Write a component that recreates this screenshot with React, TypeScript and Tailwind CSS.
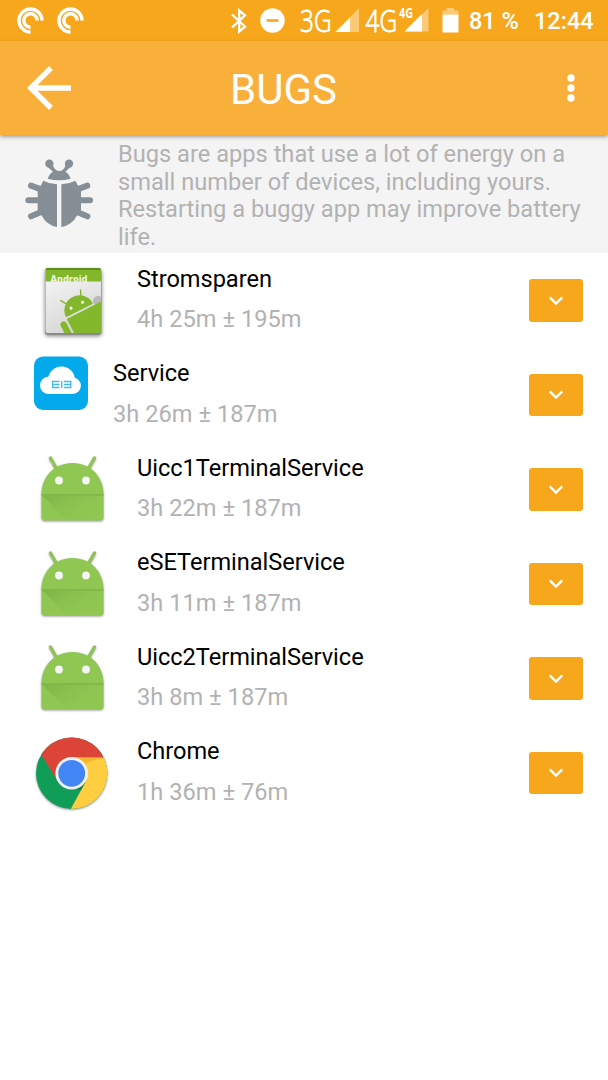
import type { ReactNode } from "react";

type IconKind = "package" | "cloud" | "android" | "chrome";

type Bug = {
  name: string;
  benefit: string;
  icon: IconKind;
};

const BUGS: Bug[] = [
  { name: "Stromsparen", benefit: "4h 25m ± 195m", icon: "package" },
  { name: "Service", benefit: "3h 26m ± 187m", icon: "cloud" },
  { name: "Uicc1TerminalService", benefit: "3h 22m ± 187m", icon: "android" },
  { name: "eSETerminalService", benefit: "3h 11m ± 187m", icon: "android" },
  { name: "Uicc2TerminalService", benefit: "3h 8m ± 187m", icon: "android" },
  { name: "Chrome", benefit: "1h 36m ± 76m", icon: "chrome" },
];

const CastIcon = () => (
  <svg width="27" height="27" viewBox="0 0 27 27" fill="none" stroke="#fff" strokeWidth="3.4">
    <path d="M13.5 25A11.5 11.5 0 1 1 25 13.5" />
    <path d="M13.5 20.2A6.7 6.7 0 1 1 20.2 13.5" />
  </svg>
);

const BluetoothIcon = () => (
  <svg width="16" height="26" viewBox="0 0 16 26" fill="none" stroke="#fff" strokeWidth="2.3">
    <path d="M1 6.5L14 18.7L8.2 23.5V2.5L14 7.4L1 19.5" />
  </svg>
);

const DoNotDisturbIcon = () => (
  <svg width="25" height="25" viewBox="0 0 25 25">
    <circle cx="12.5" cy="12.5" r="12.2" fill="#fff" />
    <path d="M6.7 12.5H18.5" stroke="#f7a71c" strokeWidth="2.6" />
  </svg>
);

const SignalIcons = () => (
  <svg width="130" height="41" viewBox="300 0 130 41" fill="#fff" fontFamily="'Open Sans', sans-serif">
    <text x="300" y="32" fontSize="30.5" fontWeight="300" stroke="#fff" strokeWidth="0.9" textLength="31.5" lengthAdjust="spacingAndGlyphs">
      3G
    </text>
    <path d="M335.5 32L359 8V32Z" opacity=".4" />
    <path d="M335.5 32L350 17.5V32Z" />
    <text x="365.5" y="32" fontSize="30.5" fontWeight="300" stroke="#fff" strokeWidth="0.9" textLength="31.5" lengthAdjust="spacingAndGlyphs">
      4G
    </text>
    <text x="399" y="18" fontSize="13.5" fontWeight="700" textLength="14" lengthAdjust="spacingAndGlyphs">
      4G
    </text>
    <path d="M404.5 31.5L428.5 8V31.5Z" opacity=".4" />
    <path d="M404.5 31.5L422 14V31.5Z" />
  </svg>
);

const BatteryIcon = () => (
  <svg width="17" height="25" viewBox="0 0 17 25" fill="#fff">
    <path d="M.5 2.5H4.5V0H12V2.5H16.5V6.5H.5Z" opacity=".4" />
    <path d="M.5 6.5H16.5V24.5H.5Z" />
  </svg>
);

const StatusBar = () => (
  <div className="flex h-[41px] items-center bg-[#f7a71c] pl-[17px] text-[23.5px] font-medium whitespace-nowrap text-white">
    <CastIcon />
    <div className="ml-[13px]">
      <CastIcon />
    </div>
    <div className="ml-[147px]">
      <BluetoothIcon />
    </div>
    <div className="ml-[13px]">
      <DoNotDisturbIcon />
    </div>
    <div className="ml-[15px]">
      <SignalIcons />
    </div>
    <div className="ml-[12px]">
      <BatteryIcon />
    </div>
    <span className="ml-[10px] w-[65px] pt-[2px]">81 %</span>
    <span className="pt-[2px]">12:44</span>
  </div>
);

const Header = () => (
  <header className="relative flex h-[94px] items-center bg-[#f9b03b] pr-[32px] pl-[27px] text-white shadow-[0_2px_4px_rgba(0,0,0,0.35)]">
    <svg width="45" height="44" viewBox="0 0 45 44" fill="none" stroke="#fff" strokeWidth="5.4">
      <path d="M44 22H5M24 2L3.8 22L24 42" />
    </svg>
    <h1 className="ml-[158px] flex-1 pt-[3px] text-[42px] leading-none">BUGS</h1>
    <svg width="10" height="30" viewBox="0 0 10 30" fill="#fff">
      <circle cx="5" cy="5" r="3.7" />
      <circle cx="5" cy="15" r="3.7" />
      <circle cx="5" cy="25" r="3.7" />
    </svg>
  </header>
);

const BugIcon = () => (
  <svg width="69" height="69" viewBox="75 88 207 207" fill="#868e96" stroke="#868e96">
    <g stroke="none">
      <circle cx="148" cy="102" r="12.5" />
      <circle cx="207" cy="102" r="12.5" />
      <path d="M143 147Q149 131 159 126L141 110L158 106Q165 124 178 124Q191 124 197 106L214 110L196 126Q206 131 212 147Q195 152 178 152Q160 152 143 147Z" />
      <path d="M130 153Q149 163 171 164V292Q139 286 124 256L113 240V185Z" />
      <path d="M226 153Q207 163 184 164V292Q217 286 232 256L243 240V185Z" />
    </g>
    <g fill="none" strokeWidth="18" strokeLinecap="round">
      <path d="M93 168L123 179M85 212H120M93 260L124 247" />
      <path d="M262 168L232 179M270 212H235M262 260L231 247" />
    </g>
  </svg>
);

const Description = () => (
  <section className="flex h-[118px] items-start bg-[#f4f4f4] pt-[6px] pl-[25px]">
    <div className="mt-[18px] shrink-0">
      <BugIcon />
    </div>
    <p className="ml-[24px] w-[475px] text-[23.65px] leading-[27.6px] text-[#b2b2b2]">
      Bugs are apps that use a lot of energy on a small number of devices, including yours. Restarting a buggy app may
      improve battery life.
    </p>
  </section>
);

const PackageIcon = () => (
  <svg width="78" height="94" viewBox="0 0 78 94" className="shrink-0">
    <defs>
      <linearGradient id="paper" x2="0.4" y2="1">
        <stop stopColor="#fafafa" />
        <stop offset="1" stopColor="#d6d6d6" />
      </linearGradient>
      <clipPath id="sheet">
        <rect x="11.5" y="15" width="55.5" height="65" rx="2" />
      </clipPath>
    </defs>
    <rect x="11" y="16" width="56.5" height="66" rx="3" fill="#8a8a8a" className="drop-shadow-[0_1px_2px_rgba(0,0,0,0.5)]" />
    <g clipPath="url(#sheet)">
      <path d="M11 14H67V81H11Z" fill="url(#paper)" />
      <path d="M11 14H67V28.5H11Z" fill="#83b72b" />
      <path d="M11 14H67V17H11Z" fill="#5f901f" />
      <text x="16.5" y="28.5" fontSize="9.5" fontWeight="700" fontFamily="'DejaVu Sans', sans-serif" fill="#f0f5dc" textLength="37" lengthAdjust="spacingAndGlyphs">
        Android
      </text>
      <circle cx="64" cy="48" r="5" fill="#b9b9b9" />
      <g transform="translate(45.5 57.5) rotate(-27) scale(1.08)">
        <path d="M-14 0A14 14 0 0 1 14 0ZM-14 1.6H28V34H-11Q-14 34 -14 31Z" fill="#84b82c" />
        <path d="M-8 -11L-11.5 -16M7 -11L9.5 -16.5" stroke="#84b82c" strokeWidth="1.3" strokeLinecap="round" />
        <path d="M-19 5V17" stroke="#84b82c" strokeWidth="6" strokeLinecap="round" />
        <circle cx="-6" cy="-5.5" r="1.4" fill="#fff" />
        <circle cx="6" cy="-5.5" r="1.4" fill="#fff" />
      </g>
    </g>
  </svg>
);

const CloudIcon = () => (
  <svg width="54" height="94" viewBox="0 0 54 94" className="shrink-0">
    <rect y="8.5" width="54" height="53.5" rx="9" fill="#02aaeb" />
    <g fill="#fff">
      <circle cx="27.5" cy="32" r="13.5" />
      <circle cx="14.7" cy="37.3" r="8.7" />
      <circle cx="38.7" cy="37.8" r="8.2" />
      <rect x="14.7" y="34" width="24" height="12" />
    </g>
    <path
      d="M25.5 33.5H18.5V39.5H25.5M18.5 36.5H25.5M27.8 33V40M30 33.5H36.8V39.5H30M30 36.5H36.8"
      fill="none"
      stroke="#45b8ec"
      strokeWidth="1.3"
    />
  </svg>
);

const AndroidIcon = () => (
  <svg width="78" height="94" viewBox="0 0 78 94" className="shrink-0">
    <defs>
      <linearGradient id="fold" x1="0" y1="0" x2="1" y2="0.6">
        <stop stopColor="#6f9f3c" stopOpacity="0.5" />
        <stop offset="1" stopColor="#8fc752" stopOpacity="0" />
      </linearGradient>
    </defs>
    <g className="drop-shadow-[0_1px_1px_rgba(0,0,0,0.4)]">
      <path d="M16.5 16L22.5 26.5M60.5 16L54.5 26.5" stroke="#8dc351" strokeWidth="3.2" strokeLinecap="round" />
      <path d="M7.5 52.5C7.5 35 20 21 38.5 21S69.5 35 69.5 52.5V75.5Q69.5 78.5 66.5 78.5H10.5Q7.5 78.5 7.5 75.5Z" fill="#8fc752" />
    </g>
    <path d="M7.5 52H69.5V53.8H7.5Z" fill="#82b648" />
    <path d="M8.5 53.8H69.5V78.5H33Z" fill="url(#fold)" />
    <circle cx="25" cy="38.5" r="3.9" fill="#f5f5f5" />
    <circle cx="52" cy="38.5" r="3.9" fill="#f5f5f5" />
  </svg>
);

const ChromeIcon = () => (
  <svg width="78" height="94" viewBox="0 0 78 94" className="shrink-0">
    <defs>
      <clipPath id="disc">
        <circle cx="37.7" cy="47.3" r="35.7" />
      </clipPath>
    </defs>
    <circle cx="37.7" cy="47.3" r="35.7" fill="#0f9d58" className="drop-shadow-[0_1px_1px_rgba(0,0,0,0.4)]" />
    <g clipPath="url(#disc)">
      <path d="M37.7 31.5H78V90H33L51.7 55.5Z" fill="#ffcd40" />
      <path d="M0 15L7.5 29L23.8 55.5L37.7 31.5H78V0H0Z" fill="#db4437" />
      <path d="M38 31.5H69L53 36.5L50 40Z" fill="#f9b52c" />
      <path d="M51.7 55.5L47 64.2L40 62Z" fill="#0b7f49" />
    </g>
    <circle cx="37.7" cy="47.3" r="16.3" fill="#f1f1f1" />
    <circle cx="37.7" cy="47.3" r="13.4" fill="#4285f4" />
  </svg>
);

const ICONS: Record<IconKind, ReactNode> = {
  package: <PackageIcon />,
  cloud: <CloudIcon />,
  android: <AndroidIcon />,
  chrome: <ChromeIcon />,
};

const BugRow = ({ name, benefit, icon }: Bug) => (
  <li className="flex h-[94.5px] items-start pr-[25.5px] pl-[34px]">
    {ICONS[icon]}
    <div className="ml-[25px] flex-1 pt-[11.5px] text-[23.6px] leading-[28px] whitespace-nowrap">
      <div className="tracking-[-0.03px] text-black">{name}</div>
      <div className="mt-[12.5px] tracking-[0.03px] text-[#b2b2b2]">{benefit}</div>
    </div>
    <button className="mt-[26px] flex h-[42.5px] w-[54px] items-center justify-center rounded-[3px] bg-[#f7a71c]">
      <svg width="16" height="11" viewBox="0 0 16 11" fill="none" stroke="#fff" strokeWidth="2.4">
        <path d="M1.8 2.3L8 8.5L14.2 2.3" />
      </svg>
    </button>
  </li>
);

export default function App() {
  return (
    <div className="h-[1080px] w-[608px] overflow-hidden bg-white font-[Roboto,sans-serif]">
      <StatusBar />
      <Header />
      <Description />
      <ul>
        {BUGS.map(bug => (
          <BugRow key={bug.name} {...bug} />
        ))}
      </ul>
    </div>
  );
}
